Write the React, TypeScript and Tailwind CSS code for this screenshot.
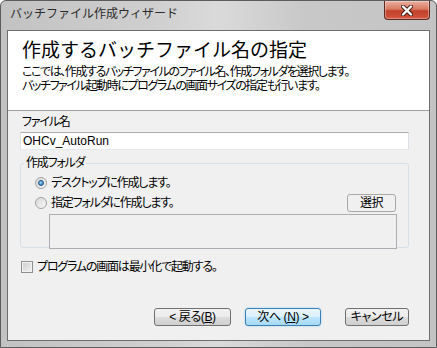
import React from 'react';

const jp = "font-['Liberation_Sans','Noto_Sans_CJK_JP',sans-serif]";

function WinButton({ children, primary = false, className = '' }: { children: React.ReactNode; primary?: boolean; className?: string }) {
  return (
    <button
      type="button"
      className={`h-[18px] rounded-[3px] border text-[12px] leading-none text-black [font-feature-settings:'palt'] tracking-[-0.4px] ${
        primary
          ? 'border-[#3c7fb1] bg-[linear-gradient(#eaf6fd_0%,#d9f0fc_50%,#bee6fd_50%,#a7d9f5_100%)] shadow-[0_0_2px_#8fd3f9]'
          : 'border-[#707070] bg-[linear-gradient(#f2f2f2_0%,#ebebeb_50%,#dddddd_50%,#cfcfcf_100%)]'
      } ${className}`}
    >
      {children}
    </button>
  );
}

function Radio({ checked }: { checked: boolean }) {
  return (
    <span className="flex h-[12px] w-[12px] shrink-0 items-center justify-center rounded-full border border-[#a0a0a0] bg-[linear-gradient(135deg,#d8d8d8,#f8f8f8)]">
      {checked && (
        <span className="h-[6px] w-[6px] rounded-full border border-[#1b4e80] bg-[radial-gradient(circle_at_35%_35%,#8cd5ff,#2a6fb0)]" />
      )}
    </span>
  );
}

export default function App() {
  return (
    <div className={`h-[348px] w-[437px] overflow-hidden rounded-t-[6px] border border-[#5c5c5c] bg-[linear-gradient(90deg,#c2c2c2,#cfcfcf_35%,#dadada_50%,#c8c8c8_70%,#c4c4c4)] ${jp}`}>
      {/* title bar */}
      <div className="flex h-[29px] items-start justify-between pl-[9px] pr-[6px]">
        <span className="mt-[6px] text-[12px] leading-[14px] text-[#2b2b2b]">バッチファイル作成ウィザード</span>
        <div className="flex h-[19px] w-[46px] items-center justify-center rounded-b-[4px] border border-t-0 border-[#5a2a22] bg-[linear-gradient(#eab1a3_0%,#d97a62_45%,#c2402a_55%,#d2573f_100%)] shadow-[inset_0_0_0_1px_rgba(255,255,255,0.35)]">
          <svg width="12" height="11" viewBox="0 0 12 11">
            <path d="M2 1.5 L10 9.5 M10 1.5 L2 9.5" stroke="#3a1a14" strokeWidth="4" strokeLinecap="round" />
            <path d="M2 1.5 L10 9.5 M10 1.5 L2 9.5" stroke="#ffffff" strokeWidth="2.4" strokeLinecap="round" />
          </svg>
        </div>
      </div>

      {/* client area */}
      <div className="mx-[6px] flex h-[311px] flex-col border border-[#6e6e6e] bg-[#f0f0f0]">
        {/* header */}
        <div className="flex h-[80px] shrink-0 flex-col border-b border-[#a0a0a0] bg-white pl-[14px]">
          <div className="mt-[9px] text-[19px] leading-[22px] text-black">作成するバッチファイル名の指定</div>
          <div className="mt-[3px] text-[12px] leading-[14px] tracking-[-1.4px] text-black [font-feature-settings:'palt']">
            ここでは、作成するバッチファイルのファイル名、作成フォルダを選択します。
            <br />
            バッチファイル起動時にプログラムの画面サイズの指定も行います。
          </div>
        </div>

        {/* body */}
        <div className="flex flex-1 flex-col pl-[12px] pr-[20px] text-[12px] leading-[14px] text-black [font-feature-settings:'palt']">
          <div className="mt-[4px] pl-[2px] tracking-[-1.2px]">ファイル名</div>
          <div className="mt-[3px] flex h-[18px] items-center border border-[#abadb3] border-b-[#e3e9ef] border-l-[#e2e3ea] border-r-[#dbdfe6] bg-white pl-[2px] font-['Liberation_Sans',sans-serif]">
            OHCv_AutoRun
          </div>

          {/* group box */}
          <div className="relative mt-[13px] h-[85px] rounded-[3px] border border-[#d5dfe5] px-[13px] pt-[12px]">
            <span className="absolute left-[3px] top-[-8px] bg-[#f0f0f0] px-[2px] tracking-[-1.2px]">作成フォルダ</span>
            <div className="flex h-[14px] items-center gap-[4px] pl-[1px] tracking-[-1.2px]">
              <Radio checked />
              <span>デスクトップに作成します。</span>
            </div>
            <div className="mt-[6px] flex h-[14px] items-center">
              <div className="flex flex-1 items-center gap-[4px] pl-[1px] tracking-[-1.2px]">
                <Radio checked={false} />
                <span>指定フォルダに作成します。</span>
              </div>
              <WinButton className="mr-[-1px] w-[49px] rounded-[2px] border-[#a8a8a8] bg-none bg-[#f0f0f0]">選択</WinButton>
            </div>
            <div className="ml-[15px] mr-[-2px] mt-[4px] h-[35px] border border-[#abadb3] bg-[#f0f0f0]" />
          </div>

          {/* checkbox */}
          <div className="mt-[12px] flex items-center gap-[4px] pl-[1px] tracking-[-1.2px]">
            <span className="h-[12px] w-[12px] shrink-0 border border-[#8e8f8f] bg-[linear-gradient(135deg,#cbcbcb,#f4f4f4)] shadow-[inset_0_0_0_1px_#f4f4f4]" />
            <span>プログラムの画面は最小化で起動する。</span>
          </div>

          {/* buttons */}
          <div className="mt-[34px] flex items-center pl-[134px]">
            <WinButton className="w-[78px]">&lt;&nbsp;戻る(<u>B</u>)</WinButton>
            <WinButton primary className="ml-[14px] w-[77px]">次へ&nbsp;(<u>N</u>)&nbsp;&gt;</WinButton>
            <WinButton className="ml-[24px] w-[65px]">キャンセル</WinButton>
          </div>
        </div>
      </div>
    </div>
  );
}
